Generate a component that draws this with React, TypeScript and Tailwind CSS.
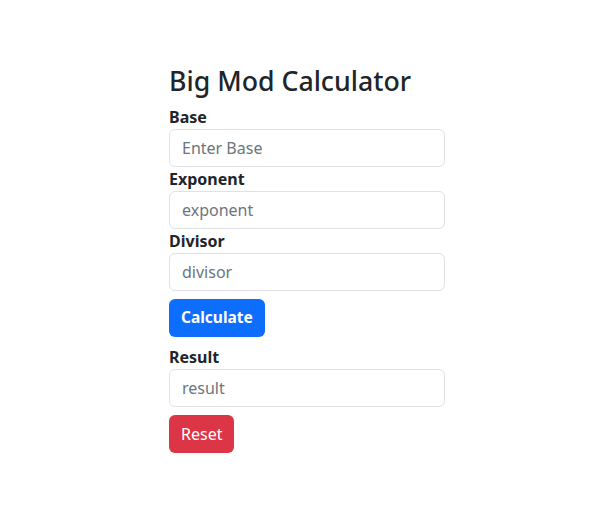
import React from "react";

const font = { fontFamily: '"Noto Sans", "Open Sans", sans-serif' };

function Field({ label, placeholder }: { label: string; placeholder: string }) {
  return (
    <div className="flex flex-col">
      <label className="text-[16px] leading-[24px] font-bold text-[#212529]">{label}</label>
      <input
        className="h-[38px] w-full rounded-[6px] border border-[#dee2e6] bg-white px-[12px] text-[16px] text-[#212529] placeholder:text-[#6c757d] outline-none"
        placeholder={placeholder}
      />
    </div>
  );
}

export default function App() {
  return (
    <div className="min-h-[508px] w-full bg-white" style={font}>
      <div className="ml-[169px] w-[276px] pt-[65px]">
        <h1 className="mb-[8px] text-[26.7px] leading-[1.2] font-medium text-[#212529]">Big Mod Calculator</h1>
        <Field label="Base" placeholder="Enter Base" />
        <Field label="Exponent" placeholder="exponent" />
        <Field label="Divisor" placeholder="divisor" />
        <button className="my-[8px] h-[38px] rounded-[6px] bg-[#0d6efd] px-[12px] text-[15.5px] font-bold text-white">
          Calculate
        </button>
        <Field label="Result" placeholder="result" />
        <button className="mt-[8px] h-[38px] rounded-[6px] bg-[#dc3545] px-[12px] text-[16px] text-white">
          Reset
        </button>
      </div>
    </div>
  );
}
